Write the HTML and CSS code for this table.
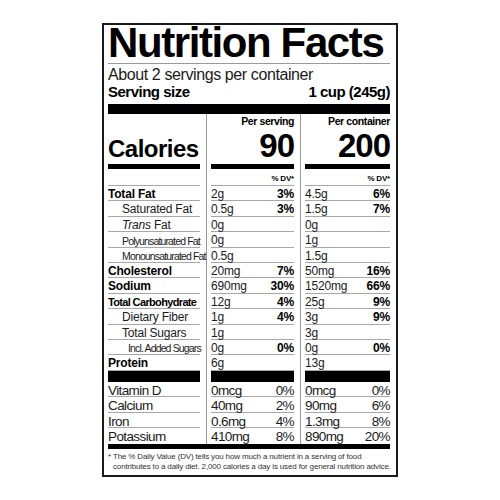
FILE: index.html
```html
<!DOCTYPE html>
<html lang="en">
<head>
    <meta charset="UTF-8">
    <meta name="viewport" content="width=device-width, initial-scale=1.0">
    <title>Nutrition Facts</title>
    <link rel="stylesheet" href="styles.css">
</head>
<body>
    <div class="label">
        <h1 class="title">Nutrition Facts</h1>
        <p class="servings">About 2 servings per container</p>
        <div class="serving-size">
            <span>Serving size</span>
            <span>1 cup (245g)</span>
        </div>
        <div class="bar bar-thick"></div>

        <div class="facts">
            <!-- Calories -->
            <div class="row calories">
                <div class="cell"><span class="cal-label">Calories</span></div>
                <div class="cell"><span class="per">Per serving</span><span class="cal-num">90</span></div>
                <div class="cell"><span class="per">Per container</span><span class="cal-num">200</span></div>
            </div>
            <div class="row dv">
                <div class="cell"></div>
                <div class="cell">% DV*</div>
                <div class="cell">% DV*</div>
            </div>

            <!-- Nutrients -->
            <div class="row">
                <div class="cell name bold">Total Fat</div>
                <div class="cell"><span>2g</span><b>3%</b></div>
                <div class="cell"><span>4.5g</span><b>6%</b></div>
            </div>
            <div class="row">
                <div class="cell name sub">Saturated Fat</div>
                <div class="cell"><span>0.5g</span><b>3%</b></div>
                <div class="cell"><span>1.5g</span><b>7%</b></div>
            </div>
            <div class="row">
                <div class="cell name sub"><i>Trans</i> Fat</div>
                <div class="cell"><span>0g</span></div>
                <div class="cell"><span>0g</span></div>
            </div>
            <div class="row">
                <div class="cell name sub small">Polyunsaturated Fat</div>
                <div class="cell"><span>0g</span></div>
                <div class="cell"><span>1g</span></div>
            </div>
            <div class="row">
                <div class="cell name sub small">Monounsaturated Fat</div>
                <div class="cell"><span>0.5g</span></div>
                <div class="cell"><span>1.5g</span></div>
            </div>
            <div class="row">
                <div class="cell name bold">Cholesterol</div>
                <div class="cell"><span>20mg</span><b>7%</b></div>
                <div class="cell"><span>50mg</span><b>16%</b></div>
            </div>
            <div class="row">
                <div class="cell name bold">Sodium</div>
                <div class="cell"><span>690mg</span><b>30%</b></div>
                <div class="cell"><span>1520mg</span><b>66%</b></div>
            </div>
            <div class="row">
                <div class="cell name bold tight">Total Carbohydrate</div>
                <div class="cell"><span>12g</span><b>4%</b></div>
                <div class="cell"><span>25g</span><b>9%</b></div>
            </div>
            <div class="row">
                <div class="cell name sub">Dietary Fiber</div>
                <div class="cell"><span>1g</span><b>4%</b></div>
                <div class="cell"><span>3g</span><b>9%</b></div>
            </div>
            <div class="row">
                <div class="cell name sub">Total Sugars</div>
                <div class="cell"><span>1g</span></div>
                <div class="cell"><span>3g</span></div>
            </div>
            <div class="row">
                <div class="cell name sub-2 small">Incl. Added Sugars</div>
                <div class="cell"><span>0g</span><b>0%</b></div>
                <div class="cell"><span>0g</span><b>0%</b></div>
            </div>
            <div class="row">
                <div class="cell name bold">Protein</div>
                <div class="cell"><span>6g</span></div>
                <div class="cell"><span>13g</span></div>
            </div>

            <div class="row bars">
                <div></div><div></div><div></div>
            </div>

            <!-- Vitamins and minerals -->
            <div class="row vit">
                <div class="cell name">Vitamin D</div>
                <div class="cell"><span>0mcg</span><span>0%</span></div>
                <div class="cell"><span>0mcg</span><span>0%</span></div>
            </div>
            <div class="row vit">
                <div class="cell name">Calcium</div>
                <div class="cell"><span>40mg</span><span>2%</span></div>
                <div class="cell"><span>90mg</span><span>6%</span></div>
            </div>
            <div class="row vit">
                <div class="cell name">Iron</div>
                <div class="cell"><span>0.6mg</span><span>4%</span></div>
                <div class="cell"><span>1.3mg</span><span>8%</span></div>
            </div>
            <div class="row vit">
                <div class="cell name">Potassium</div>
                <div class="cell"><span>410mg</span><span>8%</span></div>
                <div class="cell"><span>890mg</span><span>20%</span></div>
            </div>
        </div>

        <div class="bar bar-medium"></div>
        <p class="footnote">* The % Daily Value (DV) tells you how much a nutrient in a serving of food<br>contributes to a daily diet. 2,000 calories a day is used for general nutrition advice.</p>
    </div>
</body>
</html>
```

FILE: styles.css
```css
body {
    margin: 0;
    height: 100vh;
    display: flex;
    justify-content: center;
    align-items: center;
    background: #fff;
    color: #1a1a1a;
    font-family: "Liberation Sans", Arial, sans-serif;
}

.label {
    width: 296px;
    box-sizing: border-box;
    border: 2px solid #1a1a1a;
    padding: 0 6px 3px 4px;
}

.title {
    margin: 0;
    padding-bottom: 2px;
    border-bottom: 1px solid #999;
    font-weight: 700;
    font-size: 42px;
    line-height: 36px;
    letter-spacing: -1.4px;
    color: #000;
}

.servings {
    margin: 2px 0 0;
    font-size: 16px;
    line-height: 17px;
    letter-spacing: -0.4px;
}

.serving-size {
    display: flex;
    justify-content: space-between;
    font-weight: 700;
    font-size: 15px;
    line-height: 17px;
    letter-spacing: -0.5px;
    color: #000;
}

.bar {
    background: #000;
}

.bar-thick {
    height: 10px;
    margin-top: 4px;
}

.bar-medium {
    height: 5px;
}

/* three columns with grey rules between them */
.facts {
    background-image: linear-gradient(#9a9a9a, #9a9a9a), linear-gradient(#9a9a9a, #9a9a9a);
    background-size: 1px 100%;
    background-position: 98px 0, 192px 0;
    background-repeat: no-repeat;
}

.row {
    display: grid;
    grid-template-columns: 92px 83px 1fr;
    column-gap: 11px;
}

.cell {
    height: 15.4px;
    box-sizing: border-box;
    padding-top: 2px;
    border-bottom: 1px solid #a8a8a8;
    display: flex;
    justify-content: space-between;
    font-size: 12px;
    line-height: 13.4px;
    letter-spacing: -0.2px;
    white-space: nowrap;
}

.cell b {
    font-weight: 700;
    color: #000;
}

.name {
    display: block;
}

.name.bold {
    font-weight: 700;
    color: #000;
}

.name.tight {
    font-size: 11px;
    letter-spacing: -0.65px;
    padding-top: 2.4px;
}

.name.sub {
    padding-left: 14px;
}

.name.sub-2 {
    padding-left: 20px;
}

.name.small {
    font-size: 10.5px;
    letter-spacing: -0.85px;
    padding-top: 2.5px;
}

.calories .cell {
    height: auto;
    padding: 1px 0 0;
    border-bottom: 5px solid #000;
    flex-direction: column;
    align-items: flex-end;
    justify-content: flex-end;
    font-weight: 700;
    color: #000;
}

.calories .cell:first-child {
    align-items: flex-start;
    padding-bottom: 2px;
}

.per {
    font-size: 10.5px;
    line-height: 12px;
    letter-spacing: -0.4px;
}

.cal-num {
    font-size: 33px;
    line-height: 37px;
    letter-spacing: -1px;
}

.cal-label {
    font-size: 24px;
    line-height: 27px;
    letter-spacing: -0.5px;
}

.dv .cell {
    height: 17px;
    padding-top: 4px;
    justify-content: flex-end;
    font-size: 8px;
    line-height: 12px;
    font-weight: 700;
    color: #000;
}

.bars div {
    height: 11px;
    background: #000;
}

.vit .cell {
    height: 15.5px;
    font-size: 13.5px;
    line-height: 13px;
    letter-spacing: -0.6px;
}

.vit:last-child .cell {
    border-bottom: none;
}

.footnote {
    margin: 3.2px 0 0;
    padding-left: 5px;
    text-indent: -5px;
    font-size: 8px;
    line-height: 10px;
    letter-spacing: -0.15px;
    color: #333;
    white-space: nowrap;
}
```
